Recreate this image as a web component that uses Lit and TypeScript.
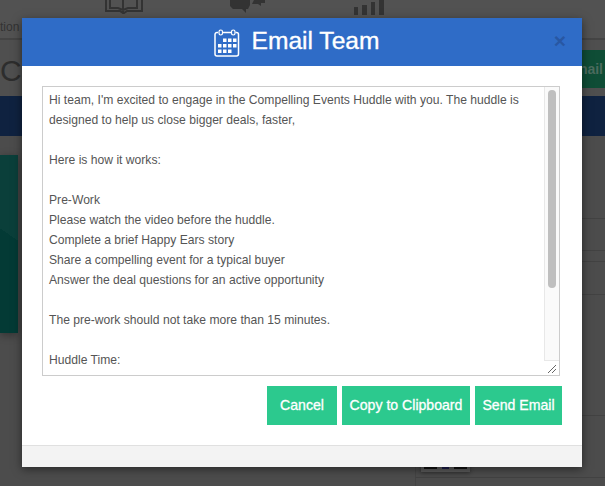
import { LitElement, html, svg, css } from "lit"
import { customElement } from "lit/decorators.js"

const LINES = [
  "Hi team, I'm excited to engage in the Compelling Events Huddle with you. The huddle is designed to help us close bigger deals, faster,",
  "",
  "Here is how it works:",
  "",
  "Pre-Work",
  "Please watch the video before the huddle.",
  "Complete a brief Happy Ears story",
  "Share a compelling event for a typical buyer",
  "Answer the deal questions for an active opportunity",
  "",
  "The pre-work should not take more than 15 minutes.",
  "",
  "Huddle Time:",
]

// calendar cells, [column, row]
const CELLS = [
  [1, 0], [2, 0], [3, 0],
  [0, 1], [1, 1], [2, 1], [3, 1],
  [0, 2], [1, 2], [2, 2],
]

@customElement("app-root")
export class AppRoot extends LitElement {
  static styles = css`
    :host {
      display: block;
      position: relative;
      width: 605px;
      height: 486px;
      overflow: hidden;
      background: #4c4c4c;
      font-family: "Liberation Sans", Arial, sans-serif;
    }
    .topbar {
      height: 38px;
      background: #525252;
      border-bottom: 2px solid #444;
      display: flex;
      position: relative;
    }
    .topbar svg { display: block; }
    .nav { display: flex; align-items: flex-start; }
    .nav-book { margin-left: 104px; }
    .nav-chat { margin-left: 86px; }
    .nav-bars { margin-left: 88px; }
    .nav-label {
      position: absolute;
      left: 0;
      top: 20px;
      font-size: 12px;
      white-space: nowrap;
      color: #333;
    }
    .title-row {
      height: 56px;
      background: #4f4f4f;
      position: relative;
    }
    .page-title {
      position: absolute;
      left: 0;
      top: 14px;
      font-size: 30px;
      line-height: 34px;
      color: #2d2d2d;
    }
    .page-btn {
      position: absolute;
      right: 0;
      top: 10px;
      width: 30px;
      height: 38px;
      padding-right: 2px;
      box-sizing: border-box;
      background: #0f4d36;
      color: #4c6b5e;
      font-size: 14px;
      line-height: 38px;
      font-weight: 700;
      text-align: right;
      overflow: hidden;
    }
    .band { height: 40px; background: #0f2240; }
    .content {
      height: 350px;
      padding-top: 19px;
      box-sizing: border-box;
      display: flex;
      justify-content: space-between;
      align-items: flex-start;
    }
    .teal {
      width: 18px;
      height: 178px;
      background: linear-gradient(215deg, #0a3f3a 0 45%, #033a35 45% 100%);
      box-shadow: 0 2px 8px rgba(0, 0, 0, 0.35);
    }
    .side {
      width: 192px;
      margin-top: 63px;
      display: flex;
      flex-direction: column;
    }
    .side > div { border-top: 1px solid #424242; }
    .row-a { height: 31px; }
    .row-b { height: 10px; }
    .row-c { height: 32px; }
    .row-d { height: 120px; }
    .row-e {
      height: 62px;
      display: flex;
      flex-direction: column;
      justify-content: flex-end;
      padding-bottom: 5px;
      box-sizing: border-box;
      border-left: 1px solid #444;
      margin-left: 2px;
    }
    .row-f { height: 8px; border-left: 1px solid #444; margin-left: 2px; }
    .card {
      width: 49px;
      height: 20px;
      margin-left: 5px;
      box-sizing: border-box;
      background: #5a5a5a;
      box-shadow: 0 1px 4px rgba(0, 0, 0, 0.4);
      display: flex;
      align-items: flex-end;
      justify-content: space-between;
      padding: 0 3px 3px;
    }
    .card i { display: block; height: 4px; background: #111; width: 13px; }
    .card i:nth-child(2) { background: #1c1c4a; width: 7px; }

    .modal {
      position: absolute;
      left: 22px;
      top: 18px;
      width: 560px;
      height: 448px;
      background: #fff;
      box-shadow: 0 3px 9px rgba(0, 0, 0, 0.5);
      display: flex;
      flex-direction: column;
    }
    .modal-head {
      height: 48px;
      flex: none;
      box-sizing: border-box;
      padding: 0 10px 2px 0;
      background: #2f6cc7;
      color: #fff;
      position: relative;
      display: flex;
      align-items: center;
      justify-content: center;
      gap: 11px;
    }
    .modal-head svg { display: block; margin-top: 3px; }
    .modal-head h4 {
      margin: 0;
      font-size: 24.6px;
      line-height: 28px;
      font-weight: 400;
      -webkit-text-stroke: 0.35px #fff;
    }
    .close {
      position: absolute;
      right: 16px;
      top: 13px;
      font-size: 21px;
      line-height: 20px;
      font-weight: 700;
      color: #2857a3;
    }
    .modal-body {
      flex: 1;
      padding: 20px 22px 20px 20px;
      display: flex;
      flex-direction: column;
      gap: 10px;
    }
    .textbox {
      height: 290px;
      box-sizing: border-box;
      border: 1px solid #ccc;
      display: flex;
      overflow: hidden;
    }
    .text {
      flex: 1;
      padding: 3px 6px;
      font-size: 12.13px;
      line-height: 20px;
      color: #555;
      overflow: hidden;
    }
    .text p { margin: 0; min-height: 20px; }
    .track {
      width: 15px;
      flex: none;
      background: #fafafa;
      border-left: 1px solid #e8e8e8;
      box-sizing: border-box;
      display: flex;
      flex-direction: column;
      align-items: center;
      padding-top: 3px;
    }
    .thumb {
      width: 8px;
      height: 198px;
      background: #bfbfbf;
      border-radius: 4px;
    }
    .grip {
      margin-top: auto;
      width: 15px;
      height: 15px;
      box-sizing: border-box;
      background: #fff;
      border-top: 1px solid #e8e8e8;
      margin-left: -1px;
      flex: none;
    }
    .grip svg { display: block; }
    .actions {
      display: flex;
      justify-content: flex-end;
      gap: 5px;
      margin-right: -2px;
    }
    .btn {
      height: 39px;
      box-sizing: border-box;
      border: 0;
      padding: 0;
      background: #2cc98e;
      color: #fff;
      font: 400 14.1px/39px "Liberation Sans", Arial, sans-serif;
      -webkit-text-stroke: 0.3px #fff;
      text-align: center;
    }
    .cancel { width: 70px; }
    .copy { width: 128px; }
    .send { width: 87px; }
    .modal-foot {
      height: 21px;
      flex: none;
      background: #f3f3f3;
      border-top: 1px solid #e0e0e0;
    }
  `

  calendar() {
    return html`<svg width="26" height="28" viewBox="0 0 26 28" fill="none" stroke="#fff">
      <path d="M4 3.500H3a2 2 0 0 0-2 2V25a2 2 0 0 0 2 2h19.500a2 2 0 0 0 2-2V5.500a2 2 0 0 0-2-2h-1M9 3.500h8" stroke-width="1.500"/>
      <rect x="5" y="1" width="3.500" height="5" rx="1.700" stroke-width="1.200"/>
      <rect x="17.500" y="1" width="3.500" height="5" rx="1.700" stroke-width="1.200"/>
      <g fill="#fff" stroke="none">
        ${CELLS.map(([c, r]) => svg`<rect x=${4 + c * 5} y=${9.5 + r * 5.5} width="3.500" height="3.500"></rect>`)}
      </g>
    </svg>`
  }

  render() {
    return html`
      <div class="topbar">
        <span class="nav-label">tion W</span>
        <div class="nav nav-book">
          <svg width="40" height="14" viewBox="0 0 40 14" fill="none" stroke="#333" stroke-width="2">
            <path d="M2 0v11h14l3 2h1l3-2h15V0M6 0v8h8l5 2 5-2h9V0M19 0v12"/>
          </svg>
        </div>
        <div class="nav nav-chat">
          <svg width="36" height="15" viewBox="0 0 36 15">
            <path d="M0 0h20v5l-2 4h-2v4l-4-4H3L0 6z" fill="#333"/>
            <path d="M22 4h6l3 2V3h4V0H24z" fill="#333"/>
          </svg>
        </div>
        <div class="nav nav-bars">
          <svg width="30" height="16" viewBox="0 0 30 16" fill="#333">
            <rect x="0" y="7" width="4" height="8"/>
            <rect x="8" y="5" width="5" height="10"/>
            <rect x="17" y="2" width="4" height="13"/>
            <rect x="25" y="0" width="5" height="15"/>
          </svg>
        </div>
      </div>
      <div class="title-row">
        <span class="page-title">Co</span>
        <div class="page-btn">nail</div>
      </div>
      <div class="band"></div>
      <div class="content">
        <div class="teal"></div>
        <div class="side">
          <div class="row-a"></div>
          <div class="row-b"></div>
          <div class="row-c"></div>
          <div class="row-d"></div>
          <div class="row-e">
            <div class="card"><i></i><i></i><i></i></div>
          </div>
          <div class="row-f"></div>
        </div>
      </div>

      <div class="modal">
        <div class="modal-head">
          ${this.calendar()}
          <h4>Email Team</h4>
          <span class="close">×</span>
        </div>
        <div class="modal-body">
          <div class="textbox">
            <div class="text">
              ${LINES.map((l) => html`<p>${l}</p>`)}
            </div>
            <div class="track">
              <div class="thumb"></div>
              <div class="grip">
                <svg width="14" height="14" viewBox="0 0 14 14" stroke="#666" fill="none">
                  <path d="M4 12L12 4M8 12L12 8"/>
                </svg>
              </div>
            </div>
          </div>
          <div class="actions">
            <button class="btn cancel">Cancel</button>
            <button class="btn copy">Copy to Clipboard</button>
            <button class="btn send">Send Email</button>
          </div>
        </div>
        <div class="modal-foot"></div>
      </div>
    `
  }
}
